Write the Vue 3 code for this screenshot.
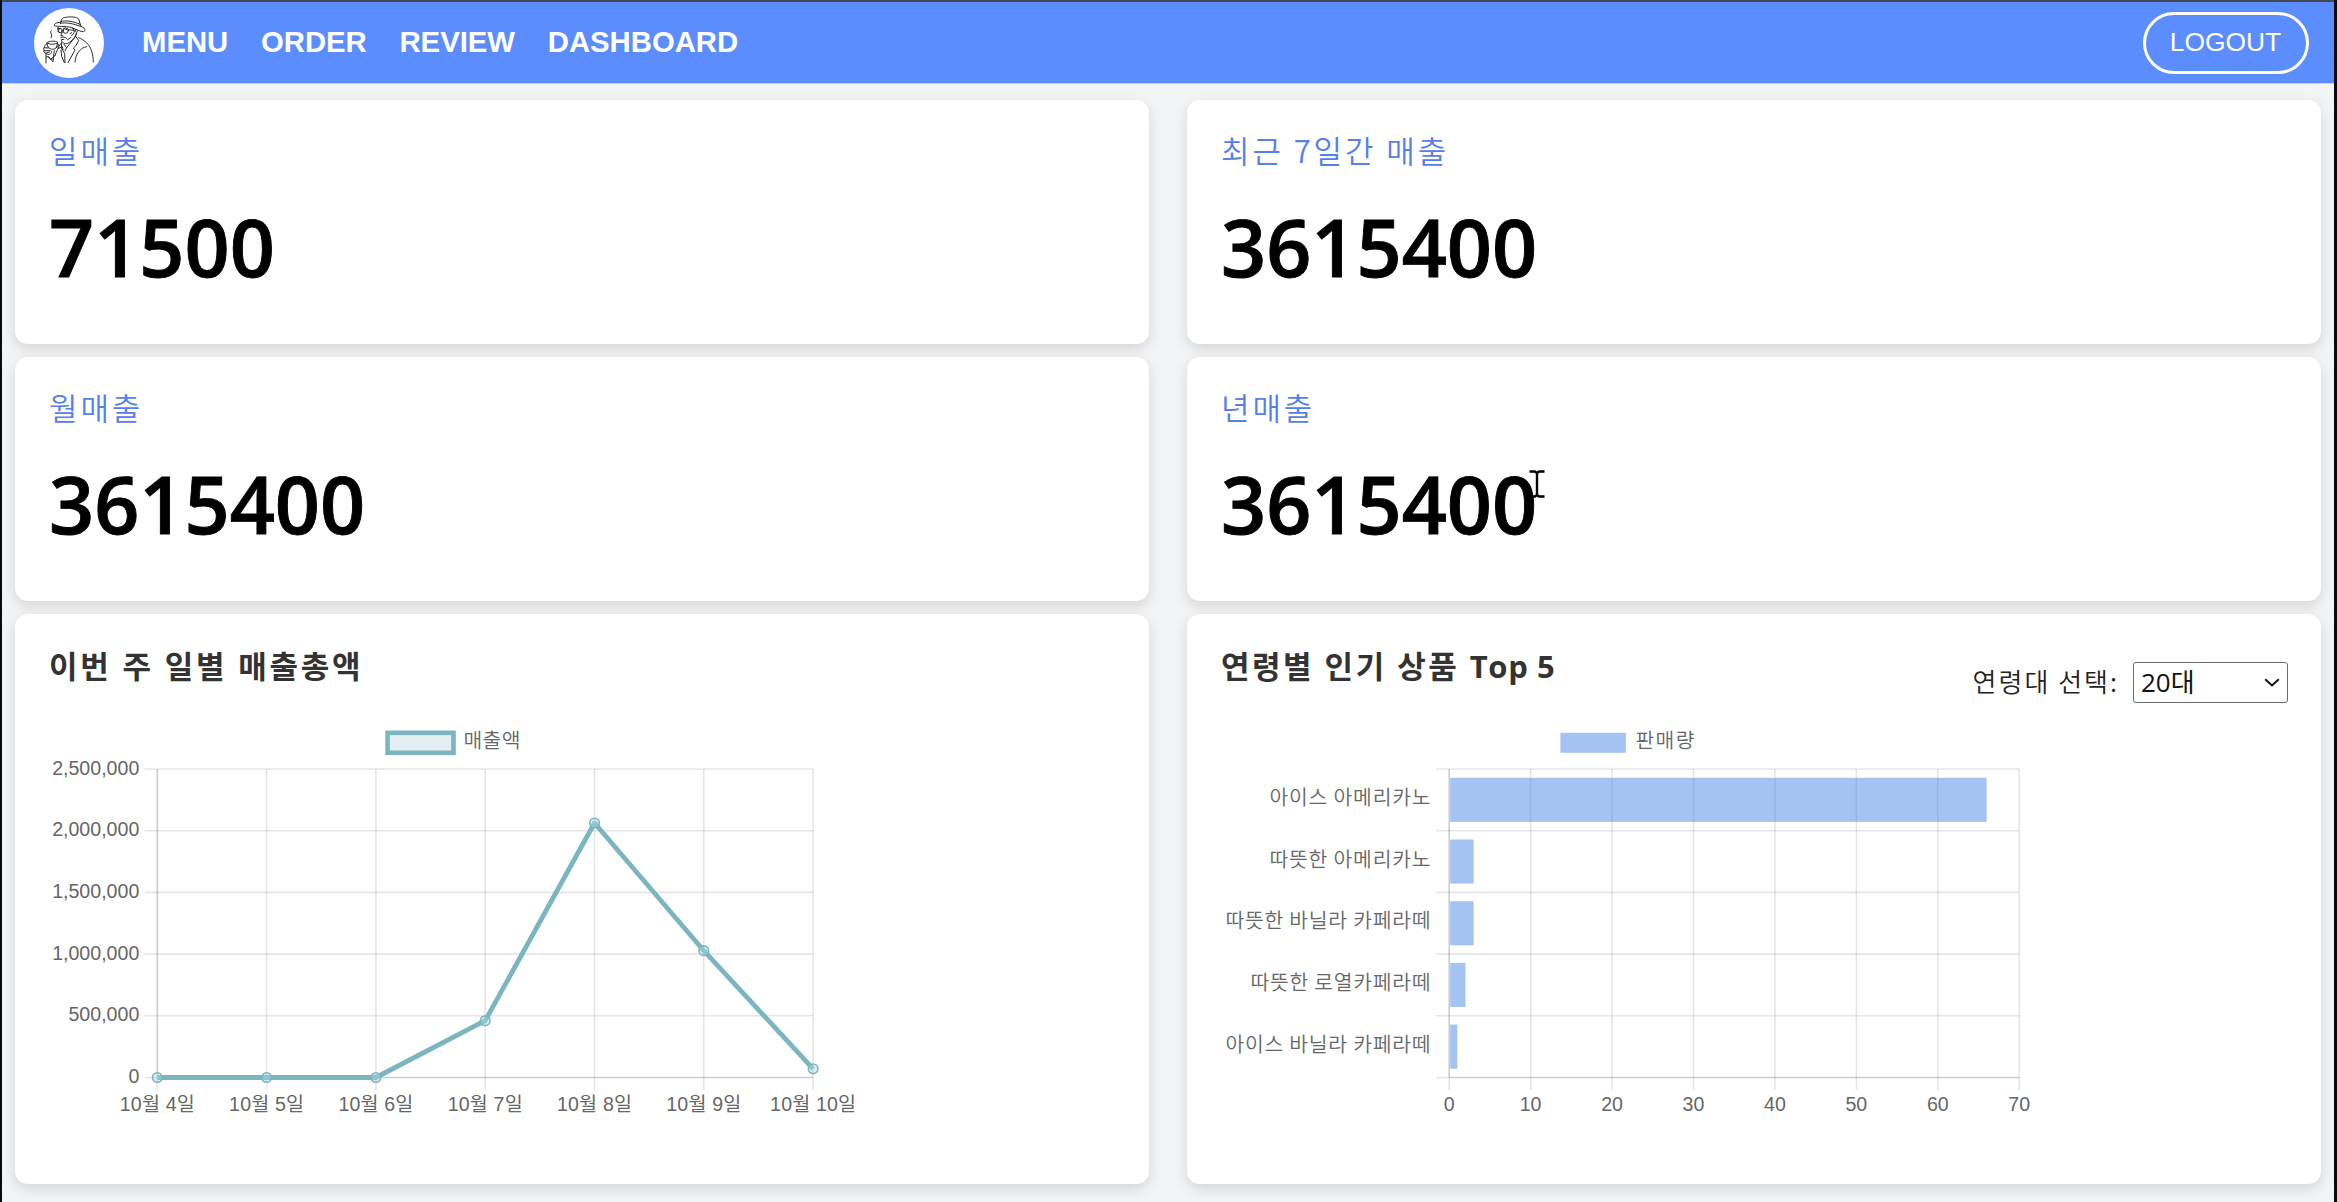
<script setup>
import { ref } from 'vue'

const navItems = ['MENU', 'ORDER', 'REVIEW', 'DASHBOARD']
const stats = [
  { label: '일매출', value: '71500' },
  { label: '최근 7일간 매출', value: '3615400' },
  { label: '월매출', value: '3615400' },
  { label: '년매출', value: '3615400' },
]

const ages = ['10대', '20대', '30대', '40대', '50대']
const age = ref('20대')

// Shared vertical geometry of both plots
const top = 52
const bottom = 360.5
const rowStep = (bottom - top) / 5
const rows = [0, 1, 2, 3, 4, 5].map((i) => top + i * rowStep)

// Daily sales line chart
const lineLeft = 107.3
const dayStep = 109.3
const yLabels = ['2,500,000', '2,000,000', '1,500,000', '1,000,000', '500,000', '0']
const days = [
  { label: '10월 4일', y: 360.5, w: 75 },
  { label: '10월 5일', y: 360.5, w: 75 },
  { label: '10월 6일', y: 360.5, w: 75 },
  { label: '10월 7일', y: 303.7, w: 75 },
  { label: '10월 8일', y: 106, w: 75 },
  { label: '10월 9일', y: 233.7, w: 75 },
  { label: '10월 10일', y: 351.8, w: 86 },
].map((d, i) => ({ ...d, x: lineLeft + i * dayStep }))
const linePoints = days.map((d) => `${d.x},${d.y}`).join(' ')

// Top 5 bar chart
const barLeft = 227.2
const unit = 8.143
const ticks = [0, 10, 20, 30, 40, 50, 60, 70].map((v) => ({ v, x: barLeft + v * unit }))
const products = [
  { name: '아이스 아메리카노', qty: 66, w: 161 },
  { name: '따뜻한 아메리카노', qty: 3, w: 161 },
  { name: '따뜻한 바닐라 카페라떼', qty: 3, w: 205 },
  { name: '따뜻한 로열카페라떼', qty: 2, w: 180 },
  { name: '아이스 바닐라 카페라떼', qty: 1, w: 205 },
]
</script>

<template>
  <div class="window">
    <header class="navbar">
      <svg class="logo" viewBox="26 23 210 210">
        <circle cx="131" cy="128" r="105" fill="#fff" />
        <g fill="none" stroke="#2b2b2b" stroke-width="3" stroke-linecap="round" stroke-linejoin="round">
          <path d="M106 69 C107 57 111 51 122 51 C136 48 155 50 160 56 L167 78" />
          <path d="M106 64 C122 58 146 64 164 72 M105 69 C122 65 144 70 165 78" />
          <path d="M105 66 C94 66 86 70 87 76 C96 80 119 76 139 82 C155 88 165 94 175 94 C183 90 179 83 167 78" />
          <path d="M98 81 L98 88 M97 85 L106 84 M115 84 L124 88 M97 92 C99 98 108 99 111 92 M111 90 L115 90" />
          <circle cx="105" cy="91" r="6" /><circle cx="121" cy="91" r="8" />
          <path d="M111 97 L106 105 L113 107 M106 112 C112 108 119 110 124 114 M109 118 L116 117 M108 119 C110 128 118 132 127 129 C141 122 151 110 152 100" />
          <path d="M129 88 L144 90 C149 93 145 103 139 105 M141 82 L149 94 L151 88 M134 100 L139 97 M156 91 L152 105 M126 119 L137 111" />
          <path d="M109 126 L108 143 L118 160 L119 187 M116 132 L124 142 L151 108 M124 142 L119 152" />
          <path d="M152 109 L160 121 L151 137 L144 143 L149 149 L128 187 M113 148 L111 139 L100 144 M107 149 L109 168 L117 187" />
          <path d="M160 112 C177 119 193 132 199 153 C202 163 204 174 204 185 M149 185 C151 162 164 141 184 139 M106 130 C99 139 94 153 89 166 M89 166 L77 176 M87 151 L83 183" />
          <path d="M78 91 C70 97 85 104 77 112" />
          <path d="M65 127 C71 121 91 121 97 126 L94 140 C89 149 76 149 69 141 Z M65 127 C73 134 90 133 97 127 M96 130 C104 131 99 141 93 141" />
          <path d="M65 131 C54 134 60 141 55 143 C54 147 59 149 55 152 C56 158 61 158 66 162 C73 165 81 157 79 153 M57 142 L69 143 M57 151 L75 151 M62 158 L72 155" />
          <path d="M62 162 L62 188 M62 170 C72 165 73 180 81 176 M68 168 L82 183" />
        </g>
      </svg>
      <nav class="links">
        <a v-for="item in navItems" :key="item">{{ item }}</a>
      </nav>
      <button class="logout">LOGOUT</button>
    </header>

    <main class="grid">
      <section v-for="stat in stats" :key="stat.label" class="card stat">
        <h3 class="stat-label">{{ stat.label }}</h3>
        <p class="stat-value">{{ stat.value }}</p>
      </section>

      <section class="card chart-card">
        <h3 class="title title-week">이번 주 일별 매출총액</h3>
        <svg class="chart" width="860" height="420">
          <rect x="337.6" y="15.8" width="65.9" height="20" fill="#e2eef3" stroke="#7bb5bf" stroke-width="4.6" />
          <text x="413.5" y="30.7" textLength="57" class="tick hangul">매출액</text>
          <g class="gridlines">
            <line v-for="y in rows" :key="y" x1="94.6" x2="763.1" :y1="y" :y2="y" />
            <line v-for="d in days" :key="d.label" :x1="d.x" :x2="d.x" :y1="top" y2="373" />
            <line :x1="lineLeft" :x2="lineLeft" :y1="top" :y2="bottom" />
            <line :x1="lineLeft" x2="763.1" :y1="bottom" :y2="bottom" />
          </g>
          <text v-for="(l, i) in yLabels" :key="l" x="89.3" :y="rows[i] + 5.6" text-anchor="end" class="tick">{{ l }}</text>
          <text v-for="d in days" :key="d.label" :x="d.x" y="394.2" text-anchor="middle" :textLength="d.w" class="tick">{{ d.label }}</text>
          <polyline :points="linePoints" class="series" />
          <circle v-for="d in days" :key="d.label" :cx="d.x" :cy="d.y" r="4.8" class="point" />
        </svg>
      </section>

      <section class="card chart-card">
        <h3 class="title title-top">연령별 인기 상품 <span class="latin">Top 5</span></h3>
        <label class="picker">
          <span class="picker-label">연령대 선택:</span>
          <span class="select-box">
            <select v-model="age">
              <option v-for="a in ages" :key="a">{{ a }}</option>
            </select>
            <svg class="chevron" width="16" height="9" viewBox="0 0 16 9">
              <path d="M1.2 1.3 L8 7.4 L14.8 1.3" fill="none" stroke="#111" stroke-width="2" />
            </svg>
          </span>
        </label>
        <svg class="chart" width="860" height="420">
          <rect x="338.4" y="15.8" width="65.4" height="20" class="bar" />
          <text x="413.5" y="30.7" textLength="59" class="tick hangul">판매량</text>
          <g class="gridlines">
            <line v-for="y in rows" :key="y" x1="214.2" x2="797.2" :y1="y" :y2="y" />
            <line v-for="t in ticks" :key="t.v" :x1="t.x" :x2="t.x" :y1="top" y2="373" />
            <line :x1="barLeft" :x2="barLeft" :y1="top" :y2="bottom" />
            <line :x1="barLeft" x2="797.2" :y1="bottom" :y2="bottom" />
          </g>
          <template v-for="(p, i) in products" :key="p.name">
            <rect :x="barLeft + 1" :y="rows[i] + 8.8" :width="p.qty * unit - 1" height="44.1" class="bar" />
            <text :x="208.5 - p.w" :y="rows[i] + 35.8" :textLength="p.w" class="tick hangul">{{ p.name }}</text>
          </template>
          <text v-for="t in ticks" :key="t.v" :x="t.x" y="394.2" text-anchor="middle" class="tick">{{ t.v }}</text>
        </svg>
      </section>
    </main>

    <svg class="cursor" width="16" height="28" viewBox="0 0 16 28">
      <path d="M0.5 1.5 H6 L8 3 L10 1.5 H15.5 M8 3 V25 M0.5 26.5 H6 L8 25 L10 26.5 H15.5" fill="none" stroke="#000" stroke-width="2.4" />
    </svg>
  </div>
</template>

<style>
html,
body {
  margin: 0;
  overflow: hidden;
}
</style>

<style scoped>
.window {
  position: relative;
  box-sizing: border-box;
  width: 2337px;
  height: 1202px;
  overflow: hidden;
  border: solid #0a0a0a;
  border-width: 0 3px 0 2px;
  background: #f3f4f6;
  font-family: 'Open Sans', 'Noto Sans CJK KR', sans-serif;
}
.navbar {
  box-sizing: border-box;
  display: flex;
  align-items: center;
  height: 84px;
  padding: 0 25.5px 0 32px;
  border-top: 2px solid #444851;
  border-bottom: 1px solid #c3d3f8;
  background: #5c8dff;
  font-family: 'Liberation Sans', Arial, sans-serif;
}
.logo {
  width: 70px;
  height: 70px;
}
.links {
  display: flex;
  gap: 32.7px;
  margin-left: 38px;
  padding-bottom: 1px;
  color: #fff;
  font-size: 29.3px;
  font-weight: 700;
}
.logout {
  box-sizing: border-box;
  width: 166px;
  height: 62px;
  margin-left: auto;
  padding: 0;
  border: 3px solid #fff;
  border-radius: 31px;
  background: none;
  color: #fff;
  font: 26.4px 'Liberation Sans', Arial, sans-serif;
}
.grid {
  display: grid;
  grid-template-columns: 1134px 1134px;
  grid-template-rows: 244px 244px 570px;
  gap: 13px 38px;
  padding: 16px 13px 18px;
}
.card {
  box-sizing: border-box;
  border-radius: 13px;
  background: #fff;
  box-shadow: 0 5px 14px rgba(0, 0, 0, 0.13);
}
.stat {
  padding: 30px 34px;
}
.stat-label {
  height: 40px;
  margin: 0;
  color: #5580ea;
  font-size: 31px;
  font-weight: 350;
  font-family: 'Noto Sans CJK KR', sans-serif;
  letter-spacing: 2.9px;
  line-height: 40px;
}
.stat-value {
  margin: 23px 0 0;
  color: #000;
  font-size: 79px;
  font-weight: 600;
  line-height: 108px;
  -webkit-text-stroke: 0.9px #000;
}
.chart-card {
  display: flex;
  position: relative;
  flex-direction: column;
  padding: 31px 35px;
}
.title {
  height: 42px;
  margin: 0 0 0 -1px;
  color: #333;
  font-size: 31px;
  font-weight: 700;
  line-height: 42px;
  white-space: nowrap;
}
.title-week {
  letter-spacing: 2.8px;
}
.title-top {
  letter-spacing: 2.5px;
}
.latin {
  letter-spacing: 0.6px;
}
.chart {
  display: block;
  margin-top: 30px;
  overflow: visible;
}
.tick {
  fill: #666;
  font-size: 19.6px;
  font-family: 'Liberation Sans', 'Noto Sans CJK KR', sans-serif;
}
.hangul {
  font-size: 20.4px;
  font-weight: 350;
  font-family: 'Noto Sans CJK KR', sans-serif;
}
.gridlines line {
  stroke: rgba(0, 0, 0, 0.1);
  stroke-width: 1.6;
}
.series {
  fill: none;
  stroke: #7bb5bf;
  stroke-width: 4.8;
  stroke-linejoin: round;
}
.point {
  fill: rgba(173, 216, 230, 0.45);
  stroke: #7bb5bf;
  stroke-width: 1.6;
}
.bar {
  fill: rgba(73, 135, 231, 0.5);
}
.picker {
  display: flex;
  position: absolute;
  top: 47.5px;
  right: 33px;
  align-items: center;
  color: #222;
  font-size: 26px;
  white-space: nowrap;
}
.picker-label {
  margin-top: -3px;
  font-family: 'Noto Sans CJK KR', sans-serif;
  font-weight: 350;
  letter-spacing: 2px;
}
.select-box {
  display: flex;
  position: relative;
  margin-left: 14px;
}
select {
  box-sizing: border-box;
  width: 155px;
  height: 41px;
  padding: 0 0 0 7px;
  border: 1.5px solid #6b6b6b;
  border-radius: 3px;
  background: #fff;
  appearance: none;
  color: #111;
  font: 26px 'Open Sans', 'Noto Sans CJK KR', sans-serif;
}
.chevron {
  position: absolute;
  top: 16px;
  right: 8px;
}
.cursor {
  position: absolute;
  top: 470px;
  left: 1526.5px;
}
</style>
